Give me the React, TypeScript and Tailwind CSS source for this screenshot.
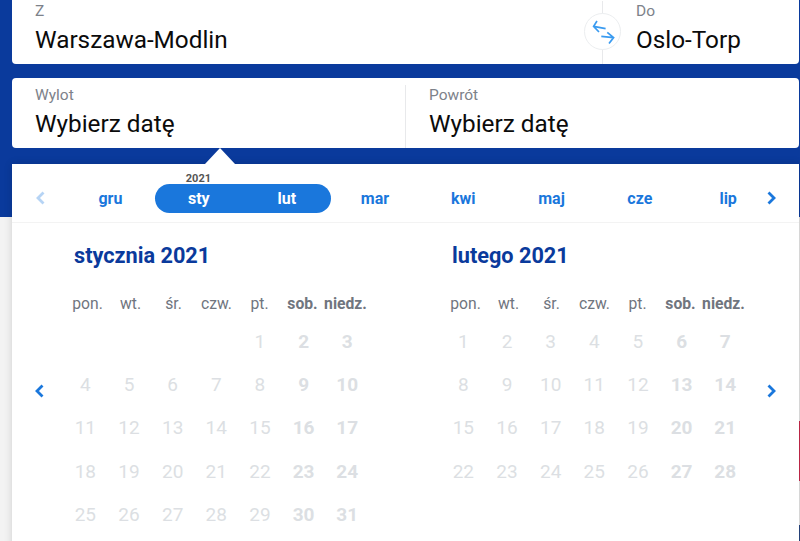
const weekdays = ["pon.", "wt.", "śr.", "czw.", "pt.", "sob.", "niedz."];
const months = ["mar", "kwi", "maj", "cze", "lip"];

function Chevron({ dir, className }: { dir: "left" | "right"; className: string }) {
  return (
    <svg viewBox="0 0 12 16" className={className} fill="none" stroke="currentColor" strokeWidth={2.8}>
      <path d={dir === "left" ? "M9.5 2.5 4 8l5.5 5.5" : "M2.5 2.5 8 8l-5.5 5.5"} />
    </svg>
  );
}

function Month({ title, offset, days, className }: { title: string; offset: number; days: number; className: string }) {
  const cells = [...Array(offset).fill(0), ...Array.from({ length: days }, (_, i) => i + 1)];
  return (
    <div className={`w-[306px] ${className}`}>
      <h3 className="h-[27px] pl-[11px] text-[21.7px] leading-[27px] font-bold text-[#0a3a9c]">{title}</h3>
      <div className="ml-[3px] mt-[25px] grid grid-cols-[repeat(7,43px)] text-center text-[15.7px] leading-[20px] text-[#70757e]">
        {weekdays.map((d, i) => (
          <div key={d} className={`whitespace-nowrap ${i > 4 ? "font-bold" : ""}`}>{d}</div>
        ))}
      </div>
      <div className="ml-[0.5px] mt-[15px] grid grid-cols-[repeat(7,43.67px)] auto-rows-[43.2px] text-center text-[19px] leading-[26px] text-[#dcdfe3]">
        {cells.map((d, i) => (
          <div key={i} className={i % 7 > 4 ? "font-bold" : ""}>{d || ""}</div>
        ))}
      </div>
    </div>
  );
}

function Field({ label, value, className }: { label: string; value: string; className: string }) {
  return (
    <div className={className}>
      <div className="text-[15.5px] leading-[20px] text-[#7d828a]">{label}</div>
      <div className="mt-[4px] text-[24.3px] leading-[30px] text-[#0b0b0b]">{value}</div>
    </div>
  );
}

export default function App() {
  return (
    <div className="relative h-[541px] w-[800px] overflow-hidden bg-[#f3f3f3] font-['Roboto',sans-serif]">
      <div className="h-[217px] bg-[#0a3a9c]">
        <div className="ml-[12px] mr-px flex h-[64px] rounded-b-[4px] bg-white pt-px">
          <Field label="Z" value="Warszawa-Modlin" className="w-[590px] pl-[23px]" />
          <div className="relative flex-1 border-l border-[#e8e9eb] pl-[33px]">
            <Field label="Do" value="Oslo-Torp" className="" />
            <div className="absolute left-[-19px] top-[12px] flex h-[37px] w-[37px] items-center justify-center rounded-full border border-[#eceef0] bg-white text-[#3a9bf0]">
              <svg viewBox="0 0 28 28" className="h-[28px] w-[28px]" fill="none" stroke="currentColor" strokeWidth={1.7}>
                <path d="M4.6 8.3 16.6 10.6M8 3 4.6 8.3 10 14M12.3 18.3 24.6 19.6M18.3 14.3 24.6 19.6 20 25.6" />
              </svg>
            </div>
          </div>
        </div>
        <div className="ml-[12px] mr-px mt-[14px] flex h-[70px] rounded-[4px] bg-white pt-[7px]">
          <Field label="Wylot" value="Wybierz datę" className="w-[394px] border-r border-[#e8e9eb] pl-[23px]" />
          <Field label="Powrót" value="Wybierz datę" className="flex-1 pl-[23px]" />
        </div>
      </div>
      <div className="absolute right-0 top-[217px] flex h-[324px] w-px flex-col bg-[#e6e6e6]">
        <div className="mt-[204px] h-[60px] bg-[#c8284a]" />
        <div className="mt-[44px] h-[16px] bg-[#27457f]" />
      </div>
      <div className="relative z-10 ml-[12px] mr-px mt-[-53px] h-[400px] bg-white shadow-[0_0_8px_rgba(0,0,0,0.15)]">
        <div className="absolute left-[193px] top-[-16px] h-0 w-0 border-x-[15px] border-b-[16px] border-x-transparent border-b-white" />
        <div className="flex h-[59px] items-center border-b border-[#f3f3f3] pl-[22px] pt-[10px] text-[16px] font-bold text-[#1a77dc]">
          <Chevron dir="left" className="h-[16px] w-[12px] text-[#b6d4f5]" />
          <div className="ml-[20px] w-[88.8px] pt-px text-center">gru</div>
          <div className="relative flex h-[29px] w-[176px] items-center rounded-full bg-[#1a77dc] text-white">
            <span className="absolute left-[31px] top-[-11px] text-[11px] leading-[12px] text-[#555]">2021</span>
            <span className="w-[88px] pt-px text-center">sty</span>
            <span className="w-[88px] pt-px text-center">lut</span>
          </div>
          {months.map((m) => (
            <div key={m} className="w-[88.3px] pt-px text-center">{m}</div>
          ))}
          <Chevron dir="right" className="ml-[-6px] h-[16px] w-[12px]" />
        </div>
        <div className="relative flex pt-[19px]">
          <Chevron dir="left" className="absolute left-[21px] top-[160px] h-[16px] w-[12px] text-[#1a77dc]" />
          <Month title="stycznia 2021" offset={4} days={31} className="ml-[51px]" />
          <Month title="lutego 2021" offset={0} days={28} className="ml-[72px]" />
          <Chevron dir="right" className="absolute left-[754px] top-[160px] h-[16px] w-[12px] text-[#1a77dc]" />
        </div>
      </div>
    </div>
  );
}
